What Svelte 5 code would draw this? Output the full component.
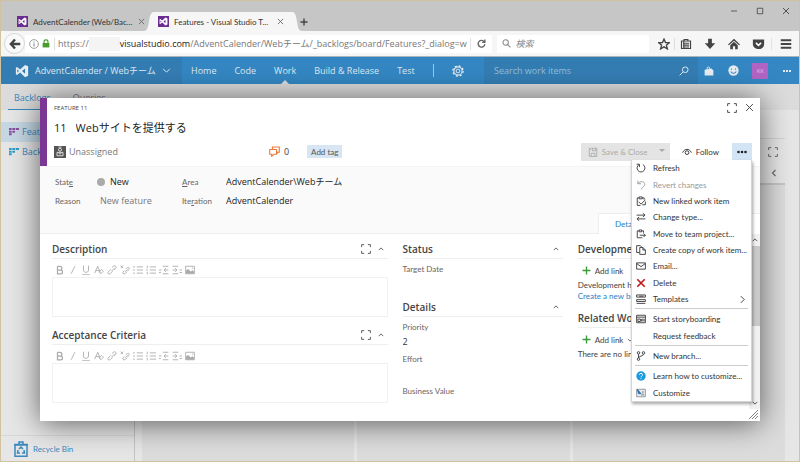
<script>
  let title = $state('Webサイトを提供する');
  let description = $state('');
  let criteria = $state('');

  const menuGroups = [
    [
      { label: 'Refresh', icon: 'refresh' },
      { label: 'Revert changes', icon: 'revert', disabled: true },
      { label: 'New linked work item', icon: 'linked' },
      { label: 'Change type...', icon: 'swap' },
      { label: 'Move to team project...', icon: 'move' },
      { label: 'Create copy of work item...', icon: 'copy' },
      { label: 'Email...', icon: 'mail' },
      { label: 'Delete', icon: 'delete' },
      { label: 'Templates', icon: 'templates', submenu: true }
    ],
    [
      { label: 'Start storyboarding', icon: 'storyboard' },
      { label: 'Request feedback', icon: '' }
    ],
    [{ label: 'New branch...', icon: 'branch' }],
    [
      { label: 'Learn how to customize...', icon: 'help' },
      { label: 'Customize', icon: 'customize' }
    ]
  ];

  const tools = ['bold', 'italic', 'underline', 'clear', 'link', 'unlink', 'bullets', 'numbers', 'outdent', 'indent', 'image'];
  const hubs = ['Home', 'Code', 'Work', 'Build & Release', 'Test'];

  // Stroke outlines on a 16 x 16 grid
  const lines = {
    close: 'M2 2L14 14M14 2L2 14',
    minimize: 'M2 8H14',
    maximize: 'M2.500 2.500H13.500V13.500H2.500Z',
    plus: 'M8 1V15M1 8H15',
    down: 'M2 5L8 11L14 5',
    up: 'M2 11L8 5L14 11',
    left: 'M11 2L5 8L11 14',
    right: 'M5 2L11 8L5 14',
    full: 'M1 5V1H5M11 1H15V5M15 11V15H11M5 15H1V11',
    search: 'M10 1.500A4.500 4.500 0 1 1 10 10.500A4.500 4.500 0 1 1 10 1.500M6.500 9.500L1 15',
    find: 'M6.500 1.500A4.500 4.500 0 1 1 6.500 11A4.500 4.500 0 1 1 6.500 1.500M10 10L15 15',
    reload: 'M13 5A6 6 0 1 0 14 9M14 1V6H9',
    refresh: 'M11 2.500A6.300 6.300 0 1 1 5 2.500M1 2H5.500V6.500',
    revert: 'M3 1V6H8M3 6C6 1 14 2 14 7C14 10 10 12 8 15',
    linked: 'M7 15H2V3H5M10 3H13V6M5 1.500H10V4.500H5ZM4 9L8 13L15 6M15 9V14H10',
    swap: 'M1 5H14M11 2L14.500 5L11 8M15 11H2M5 8L1.500 11L5 14',
    move: 'M10 14H2V3H5M9 3H12V6M5 1.500H9V4.500H5ZM6 10H15M12 7L15 10L12 13',
    copy: 'M5 12H1V1H7L9 3M6 4H11L15 8V15H6ZM11 4V8H15',
    mail: 'M1 3H15V13H1ZM1 4L8 9L15 4',
    templates: 'M1 1.500H15V5H1ZM1 9H15V12H1ZM1 15H15M5 3.500H12',
    storyboard: 'M1 2H15V14H1ZM1 5H15M3 8H7V12H3ZM9 8V12M11 7V12M13 8V12',
    branch: 'M4 5V11M12 5C12 9 5 7 4 11M4 1A2 2 0 1 1 4 5A2 2 0 1 1 4 1M12 1A2 2 0 1 1 12 5A2 2 0 1 1 12 1M4 11A2 2 0 1 1 4 15A2 2 0 1 1 4 11',
    eye: 'M1 9C4 2 12 2 15 9M8 6A3 3 0 1 1 8 12A3 3 0 1 1 8 6',
    comments: 'M5 5V1.500H15V9H13L12 11V9H11M1 5H11V12H7L4 15V12H1Z',
    save: 'M2 5V15H14V2H6M5 15V10H11V15M7 2V6H12V2M1 1L5 5M5 1L1 5',
    bold: 'M4 2V14H9C13 14 13 8 9 8H4M4 2H8C12 2 12 8 8 8',
    italic: 'M11 2L5 14',
    underline: 'M4 1V8C4 13 12 13 12 8V1M2 15.500H14',
    clear: 'M1 13L6 2L10 12M3 9H8M12 7L15 10L11 14L8 11Z',
    link: 'M7 10L12 5M8 4L11 1.500C13 0 16 3 14 5L11 8M6 7L2 11C0 13 3 16 5 14L9 10',
    unlink: 'M1 1L5 5M5 1L1 5M8 11L12 7M9 6L12 4C14 3 16 5 14 7L12 10M7 9L5 11C3 13 6 15 8 14L11 11',
    bullets: 'M6 3H16M6 8H16M6 13H16M0 3H3M0 8H3M0 13H3',
    numbers: 'M6 3H16M6 8H16M6 13H16M2 1V5M0 8H3M2 11V15',
    outdent: 'M6 2H15M8 8H15M6 14H15M11 5L8 8L11 11M0 8H4M0 12H3',
    indent: 'M1 2H10M1 8H8M1 14H10M5 5L8 8L5 11M12 8H16M12 12H16',
    bin: 'M2 4H14V15.300H2ZM1 3.500H15M6 3V1H10V3M6 8L8 6L10 8M5 9L4.500 12H7M11 9L11.500 12H9'
  };
</script>

{#snippet icon(name, size = 10, weight = 1.4)}
  <svg width={size} height={size} viewBox="0 0 16 16" fill="none" stroke="currentColor" stroke-width={weight} aria-hidden="true">
    {#if name === 'delete'}
      <path d="M2 2L14 14M14 2L2 14" stroke="#c41d20" stroke-width="2.800" />
    {:else if name === 'help'}
      <circle cx="8" cy="8" r="7.500" fill="#1a9be0" stroke="none" />
      <path d="M5.500 6C5.500 3 10.500 3 10.500 6C10.500 8 8 8 8 10M8 11.500V13" stroke="#fff" stroke-width="1.600" />
    {:else if name === 'customize'}
      <path d="M1 2H15V14H1Z" fill="#e6eaee" stroke="#8b9197" />
      <path d="M8 11H13M11 5V9" stroke="#777" />
      <path d="M2 2L8 9L4 9Z" fill="#2d6fae" stroke="#2d6fae" />
    {:else if name === 'image'}
      <path d="M1 2H15V14H1Z" />
      <path d="M2 13V9L5 7L9 11L12 9L14 11V13Z" fill="currentColor" />
      <path d="M11 5H13" />
    {:else if name}
      <path d={lines[name]} />
    {/if}
  </svg>
{/snippet}

{#snippet vs(size, color)}
  <svg width={size} height={size} viewBox="0 0 16 16" fill={color} aria-hidden="true">
    <path fill-rule="evenodd" d="M11.500 1L15 2.500V13.500L11.500 15L5.800 9.800L2.300 12.500L1 11.800V4.200L2.300 3.500L5.800 6.200ZM11.500 5L8 8L11.500 11ZM2.600 6V10L4.500 8Z" />
  </svg>
{/snippet}

{#snippet backlogIcon(color)}
  <svg width="10" height="8" viewBox="0 0 15 12" fill={color} aria-hidden="true">
    <path d="M0 0H4V3H0ZM5 0H9V3H5ZM10 0H15V3H10ZM0 4H4V7H0ZM5 4H9V7H5ZM0 8H4V11H0Z" />
  </svg>
{/snippet}

{#snippet editor(id, heading)}
  <section class="editor">
    <h2>
      <label for={id}>{heading}</label>
      <button aria-label="Full screen">{@render icon('full', 10, 1.5)}</button>
      <button aria-label="Collapse">{@render icon('up', 6, 2.4)}</button>
    </h2>
    <div class="tools">
      {#each tools as tool}
        <button aria-label={tool}>{@render icon(tool, 10, tool === 'bold' ? 2 : 1.4)}</button>
      {/each}
    </div>
    {#if id === 'description'}
      <textarea {id} bind:value={description}></textarea>
    {:else}
      <textarea {id} bind:value={criteria}></textarea>
    {/if}
  </section>
{/snippet}

<div class="window" lang="ja">
  <div class="tabstrip">
    <div class="tab small">
      <span class="favicon">{@render vs(9, '#fff')}</span>
      <span>AdventCalender (Web/Bac...</span>
      <button aria-label="Close tab">{@render icon('close', 7, 2)}</button>
    </div>
    <div class="tab active small">
      <svg class="curve" viewBox="0 0 10 18" preserveAspectRatio="none" aria-hidden="true"><path d="M0 18C7 18 3 0 10 0V18Z" fill="#f6f6f6" /></svg>
      <span class="favicon">{@render vs(9, '#fff')}</span>
      <span>Features - Visual Studio T...</span>
      <button aria-label="Close tab">{@render icon('close', 7, 2)}</button>
      <svg class="curve end" viewBox="0 0 10 18" preserveAspectRatio="none" aria-hidden="true"><path d="M10 18C3 18 7 0 0 0V18Z" fill="#f6f6f6" /></svg>
    </div>
    <button class="newtab" aria-label="New tab">{@render icon('plus', 8, 2.8)}</button>
    <div class="caption">
      <button aria-label="Minimize">{@render icon('minimize', 8, 1.6)}</button>
      <button aria-label="Maximize">{@render icon('maximize', 8, 1.6)}</button>
      <button aria-label="Close">{@render icon('close', 8, 1.8)}</button>
    </div>
  </div>

  <div class="navbar">
    <button class="back" aria-label="Back">
      <svg width="12" height="12" viewBox="0 0 16 16" fill="none" stroke="#444" stroke-width="3.200"><path d="M8 2L2.500 8L8 14M3 8H15" /></svg>
    </button>
    <div class="address">
      <svg width="10" height="10" viewBox="0 0 16 16" fill="none" stroke="#8a8a8a" stroke-width="1.300"><circle cx="8" cy="8" r="7" /><path d="M8 4V5.500M8 7V12" stroke-width="1.800" /></svg>
      <svg width="8" height="9" viewBox="0 0 14 16" fill="#4a9c2d"><path d="M1 7H13V15H1Z" /><path d="M3.500 8V5C3.500 0.500 10.500 0.500 10.500 5V8" fill="none" stroke="#4a9c2d" stroke-width="2" /></svg>
      <span class="rule"></span>
      <span class="url">https://<i></i><b>visualstudio.com</b>/AdventCalender/Webチーム/_backlogs/board/Features?_dialog=wo</span>
      <button class="reload" aria-label="Reload">{@render icon('reload', 9, 2.4)}</button>
    </div>
    <label class="find">
      {@render icon('find', 9, 1.8)}
      <input type="search" placeholder="検索" aria-label="検索" />
    </label>
    <div class="actions">
      <button class="bookmark" aria-label="Bookmark"><svg width="12" height="12" viewBox="0 0 16 16" fill="none" stroke="#444" stroke-width="1.800"><path d="M8 1.500L10 6L15 6.300L11.200 9.500L12.500 14.500L8 11.800L3.500 14.500L4.800 9.500L1 6.300L6 6Z" /></svg></button>
      <button aria-label="Reading list"><svg width="12" height="12" viewBox="0 0 16 16" fill="none" stroke="#444" stroke-width="1.600"><path d="M2 4H14V14H2ZM5.500 4V2H10.500V4M5 7H12M5 9.500H12M5 12H12M5 4V14" /></svg></button>
      <button aria-label="Downloads"><svg width="12" height="12" viewBox="0 0 16 16" fill="#444"><path d="M5.500 1H10.500V7H15L8 14.500L1 7H5.500Z" /></svg></button>
      <button aria-label="Home page"><svg width="12" height="12" viewBox="0 0 16 16" fill="#444"><path d="M8 1L16 8.500L14.800 9.800L8 3.700L1.200 9.800L0 8.500ZM3 9.500L8 5L13 9.500V15H9.500V11H6.500V15H3Z" /></svg></button>
      <button aria-label="Pocket"><svg width="13" height="12" viewBox="0 0 17 16"><path d="M1 2H16V8C16 17 1 17 1 8Z" fill="#444" /><path d="M5 6.500L8.500 9.800L12 6.500" fill="none" stroke="#fff" stroke-width="2" /></svg></button>
      <button class="burger" aria-label="Menu"><svg width="12" height="12" viewBox="0 0 16 16" stroke="#444" stroke-width="2.600"><path d="M1 3H15M1 8H15M1 13H15" /></svg></button>
    </div>
  </div>

  <header class="hub">
    <button class="project">{@render vs(14, '#e6eef4')}<span>AdventCalender / Webチーム</span>{@render icon('down', 9, 1.7)}</button>
    <nav>
      {#each hubs as hub}
        <a href="#{hub}" class:current={hub === 'Work'}>{hub}</a>
      {/each}
      <span class="divider"></span>
      <button aria-label="Settings"><svg width="12" height="12" viewBox="0 0 16 16" fill="none" stroke="#e1ebf2"><circle cx="8" cy="8" r="5.500" stroke-width="1.400" /><circle cx="8" cy="8" r="2.500" stroke-width="1.300" /><circle cx="8" cy="8" r="6.800" stroke-width="1.800" stroke-dasharray="2.700 2.640" /></svg></button>
    </nav>
    <label class="lookup">
      <input type="search" placeholder="Search work items" aria-label="Search work items" />
      {@render icon('search', 10, 1.6)}
    </label>
    <div class="account">
      <button aria-label="Marketplace"><svg width="10" height="10" viewBox="0 0 16 16" fill="#e6edf2"><path d="M1 6L12 4L15 7V15H1Z" /><path d="M5 6V3C5 1 9 1 9 3V5" fill="none" stroke="#e6edf2" stroke-width="1.400" /></svg></button>
      <button aria-label="Feedback"><svg width="11" height="11" viewBox="0 0 16 16"><circle cx="8" cy="8" r="7.500" fill="#e6edf2" /><path d="M5 5V7M11 5V7M4 9.500C6 13 10 13 12 9.500" fill="none" stroke="#3487c3" stroke-width="1.500" /></svg></button>
      <button class="avatar">KK</button>
      <button aria-label="More"><svg width="10" height="4" viewBox="0 0 10 4" fill="#e1ebf2"><path d="M1 1H3V3H1ZM4 1H6V3H4ZM7 1H9V3H7Z" /></svg></button>
    </div>
  </header>

  <div class="views"><a class="on" href="#backlogs">Backlogs</a><a href="#queries">Queries</a></div>

  <div class="page">
    <aside>
      <a class="selected" href="#features">{@render backlogIcon('#8a4f9e')}Features</a>
      <a href="#items">{@render backlogIcon('#2f9cc4')}Backlog items</a>
      <a class="recycle small" href="#bin">{@render icon('bin', 16, 1.5)}Recycle Bin</a>
    </aside>
    <main>
      <div class="boardbar"></div>
      <div class="boardhead"><button aria-label="Full screen board">{@render icon('full', 10, 1.5)}</button><button aria-label="Collapse column">{@render icon('left', 8, 2.2)}</button></div>
      <div class="board"><div></div><div></div><div></div></div>
    </main>
  </div>

  <div class="dialog" role="dialog" aria-label="Feature 11">
    <div class="head">
      <div class="row top">
        <span class="kind">FEATURE 11</span>
        <span class="grow"></span>
        <button aria-label="Maximize dialog">{@render icon('full', 10, 1.5)}</button>
        <button aria-label="Close dialog">{@render icon('close', 9, 1.7)}</button>
      </div>
      <div class="row title">
        <span>11</span>
        <input bind:value={title} aria-label="Title" />
      </div>
      <div class="row commands">
        <button class="assignee">
          <svg width="12" height="12" viewBox="0 0 16 16"><path d="M0 0H16V16H0Z" fill="#555" /><path d="M8 3A2 2 0 1 1 8 7A2 2 0 1 1 8 3M4 8.500H12V13H4ZM6 9L8 11L10 9M6 1.500H10" fill="none" stroke="#e6e6e6" stroke-width="1.200" /></svg>
          Unassigned
        </button>
        <button class="comments">{@render icon('comments', 11, 1.6)}<span>0</span></button>
        <button class="tag small">Add tag</button>
        <span class="grow"></span>
        <button class="save small" disabled>{@render icon('save', 10, 1.4)}<span>Save &amp; Close</span><i></i></button>
        <button class="follow small">{@render icon('eye', 10, 1.5)}Follow</button>
        <button class="more" aria-label="Actions"><svg width="10" height="4" viewBox="0 0 10 4" fill="#222"><circle cx="1.500" cy="2" r="1.300" /><circle cx="5" cy="2" r="1.300" /><circle cx="8.500" cy="2" r="1.300" /></svg></button>
      </div>
    </div>

    <div class="summary">
      <div class="fields">
        <label class="small" for="state">Stat<u>e</u></label>
        <span class="value dot"><input id="state" value="New" /></span>
        <label class="small" for="area"><u>A</u>rea</label>
        <input id="area" value="AdventCalender\Webチーム" />
        <label class="small" for="reason">Reason</label>
        <input id="reason" class="muted" value="New feature" />
        <label class="small" for="iteration">Ite<u>r</u>ation</label>
        <input id="iteration" value="AdventCalender" />
      </div>
      <button class="pagetab small">Details</button>
    </div>

    <div class="body">
      <div class="columns">
        <div class="column">
          {@render editor('description', 'Description')}
          {@render editor('criteria', 'Acceptance Criteria')}
        </div>
        <div class="column small">
          <section class="status">
            <h2>Status<button aria-label="Collapse">{@render icon('up', 6, 2.4)}</button></h2>
            <label for="target">Target Date</label>
            <input id="target" />
          </section>
          <section>
            <h2>Details<button aria-label="Collapse">{@render icon('up', 6, 2.4)}</button></h2>
            <label for="priority">Priority</label>
            <input id="priority" value="2" />
            <label for="effort">Effort</label>
            <input id="effort" />
            <label for="value">Business Value</label>
          </section>
        </div>
        <div class="column small links">
          <section class="development">
            <h2>Development</h2>
            <button class="add"><span class="green">{@render icon('plus', 9, 2.4)}</span>Add link</button>
            <p>Development hasn't started on this item.</p>
            <a href="#branch">Create a new branch</a>
          </section>
          <section>
            <h2>Related Work</h2>
            <button class="add"><span class="green">{@render icon('plus', 9, 2.4)}</span>Add link {@render icon('down', 6, 2)}</button>
            <p>There are no links in this group.</p>
          </section>
        </div>
      </div>
      <div class="scrollbar">{@render icon('up', 6, 2.6)}<i></i>{@render icon('down', 6, 2.6)}</div>
    </div>
    <div class="foot"><svg width="9" height="9" viewBox="0 0 9 9" stroke="#888"><path d="M0 9L9 0M3 9L9 3M6 9L9 6" /></svg></div>

    <div class="menu small" role="menu">
      {#each menuGroups as group, i}
        {#if i}<hr />{/if}
        {#each group as item}
          <button role="menuitem" disabled={item.disabled}>
            {@render icon(item.icon, 10, 1.4)}<span>{item.label}</span>
            {#if item.submenu}{@render icon('right', 9, 1.6)}{/if}
          </button>
        {/each}
      {/each}
    </div>
  </div>
</div>

<style>
  :global(body) { background: #e6e6e6; }
  .window, .window * { box-sizing: border-box; }
  .window {
    position: relative;
    display: flex;
    flex-direction: column;
    min-height: 100vh;
    overflow: hidden;
    border: 1px solid #cfc3a0;
    font: 9px/12px "Open Sans", "Noto Sans CJK JP", sans-serif;
    color: #333;
    background: #e6e6e6;
  }
  button, input, textarea { margin: 0; padding: 0; border: 0; background: none; font: inherit; color: inherit; outline: 0; border-radius: 0; }
  .small, button.small { font: 8px/12px Lato, "Noto Sans CJK JP", sans-serif; }
  input { min-width: 0; width: 100%; appearance: none; }
  button { display: flex; align-items: center; white-space: nowrap; }
  a { color: inherit; text-decoration: none; }
  svg { display: block; flex: none; }
  h2, p { margin: 0; font-weight: 400; }
  .grow { flex: 1; }

  .tabstrip { display: flex; align-items: flex-end; height: 30px; background: #c6c6c6; }
  .tab { display: flex; align-items: center; gap: 5px; height: 19px; width: 137px; padding-left: 16px; color: #333; white-space: nowrap; }
  .tab button { color: #666; margin-left: auto; }
  .favicon { display: grid; place-items: center; width: 11px; height: 11px; background: #6c2c91; flex: none; }
  .tab.active { position: relative; width: 138px; margin-left: 16px; padding-left: 4px; background: #f6f6f6; }
  .tab.active button { margin-right: 8px; }
  .curve { position: absolute; left: -10px; top: 0; width: 10px; height: 100%; }
  .curve.end { left: 100%; }
  .newtab { height: 19px; margin-left: 8px; color: #444; }
  .caption { display: flex; gap: 18px; align-self: flex-start; margin: 6px 9px 0 auto; color: #444; }

  .navbar { display: flex; align-items: center; height: 26px; background: #f6f6f6; border-bottom: 1px solid #a9b4bc; }
  .back { justify-content: center; width: 21px; height: 21px; margin-left: 3px; border: 1px solid #d5d5d5; border-radius: 50%; background: #fafafa; }
  .address { display: flex; align-items: center; gap: 3px; flex: 1; min-width: 0; height: 18px; padding-left: 4px; background: #fff; }
  .rule { width: 1px; height: 12px; margin-left: 1px; background: #ddd; }
  .url { flex: 1; min-width: 0; overflow: hidden; white-space: nowrap; color: #777; line-height: 16px; }
  .url i { display: inline-block; width: 31px; height: 14px; background: #f4f4f4; vertical-align: middle; }
  .url b { font-weight: 400; color: #222; }
  .reload { justify-content: center; width: 22px; height: 12px; border-left: 1px solid #e2e2e2; color: #666; }
  .find { display: flex; align-items: center; gap: 4px; flex: 0 0 19%; height: 18px; margin-left: 5px; padding: 0 5px; background: #fff; color: #888; }
  .find input { font-style: italic; }
  .find input::placeholder { color: #888; opacity: 1; }
  .actions { display: flex; margin: 0 7px 0 9px; }
  .actions button { margin-right: 12px; }
  .actions .bookmark { margin-right: 5px; padding-right: 4px; border-right: 1px solid #ddd; }
  .actions .burger { margin: 0 0 0 -6px; padding-left: 8px; border-left: 1px solid #e2e2e2; }

  .hub { display: flex; height: 27px; background: #3487c3; color: #dfe9f1; }
  .project { width: 181px; padding-left: 14px; gap: 6px; background: #347db3; }
  .hub nav { display: flex; align-items: stretch; flex: 1; gap: 18px; padding-left: 9px; }
  .hub nav a { position: relative; display: flex; align-items: center; white-space: nowrap; }
  .hub nav .current::after { content: ""; position: absolute; left: calc(50% - 4px); bottom: 0; border: 4px solid transparent; border-top: 0; border-bottom-color: #dcdcdc; }
  .divider { width: 1px; height: 13px; align-self: center; background: #a9c6dc; }
  .lookup { display: flex; align-items: center; width: 214px; padding: 0 9px 0 10px; background: #347db3; }
  .lookup input::placeholder { color: #94bdd9; opacity: 1; }
  .account { display: flex; align-items: center; justify-content: space-between; width: 101px; padding: 0 7px 0 6px; }
  .avatar { justify-content: center; width: 16px; height: 16px; background: #b264c4; font-size: 6px; color: #dcc0e4; }

  .views { display: flex; gap: 16px; height: 26px; padding-left: 7px; background: #dcdcdc; color: #777; }
  .views a { padding: 8px 6px 0; }
  .views a + a { padding-left: 0; }
  .views .on { color: #3b88be; border-bottom: 1px solid #3b88be; }

  .page { display: flex; flex: 1; }
  aside { display: flex; flex-direction: column; width: 134px; padding-top: 12px; border-right: 1px solid #c4c4c4; color: #3b88be; }
  aside a { display: flex; align-items: center; gap: 3px; height: 20px; padding-left: 8px; }
  aside .selected { background: #c5d8e4; }
  aside .recycle { height: 26px; margin-top: auto; padding-left: 12px; gap: 4px; border-top: 1px solid #d8d8d8; }
  main { display: flex; flex-direction: column; flex: 1; padding: 0 14px 0 7px; }
  .boardbar { height: 29px; border-bottom: 1px solid #d2d2d2; }
  .boardhead { display: flex; flex-direction: column; align-items: flex-end; gap: 12px; height: 46px; padding: 8px 7px 0 0; border-bottom: 2px solid #c6c6c6; color: #666; }
  .board { display: grid; grid-template-columns: repeat(3, 1fr); gap: 3px; flex: 1; }
  .board div { background: #dcdcdc; }

  .dialog { position: absolute; inset: 97px 39px 40px; display: flex; flex-direction: column; background: #fff; box-shadow: 0 2px 28px rgba(0, 0, 0, 0.6); }
  .head { display: flex; flex-direction: column; height: 68px; padding: 0 6px 0 7px; border-left: 7px solid #7a3793; }
  .row { display: flex; align-items: center; }
  .top { height: 19px; gap: 8px; color: #444; }
  .kind { font-size: 6px; }
  .title { height: 22px; gap: 9px; font-size: 11px; line-height: 18px; color: #222; }
  .commands { height: 25px; padding-right: 2px; }
  .assignee { gap: 3px; color: #777; }
  .comments { gap: 4px; margin-left: 151px; color: #444; }
  .comments :global(svg) { color: #ee7b3a; }
  .tag { height: 13px; margin-left: 18px; padding: 0 4px; background: #d7e6f2; color: #555; }
  .save { height: 18px; width: 89px; padding-left: 7px; gap: 4px; background: #e4e4e4; color: #aaa; }
  .save i { margin: 0 5px 2px auto; border: 3px solid transparent; border-top-color: #aaa; border-bottom: 0; }
  .follow { gap: 4px; margin: 0 13px 0 12px; }
  .more { justify-content: center; width: 20px; height: 18px; background: #d3e5f5; }

  .summary { position: relative; height: 68px; padding: 5px 15px; background: #fafafa; border-top: 1px solid #f3f3f3; border-bottom: 1px solid #eee; }
  .fields { display: grid; grid-template-columns: 45px 82px 44px 200px; grid-auto-rows: 19px; align-items: center; color: #222; }
  .fields label { padding-top: 1px; color: #666; }
  .dot { display: flex; align-items: center; gap: 5px; }
  .dot::before { content: ""; flex: none; width: 8px; height: 8px; margin-left: -3px; border-radius: 50%; background: #aaa; }
  .muted { color: #777; }
  .pagetab { position: absolute; right: 0; bottom: -1px; width: 162px; height: 21px; padding-left: 16px; border: 1px solid #eee; border-bottom: 0; border-right: 0; background: #fff; color: #1f7fc9; }

  .body { display: flex; flex: 1; min-height: 0; }
  .columns { display: grid; grid-template-columns: 335fr 160fr 171fr; gap: 15px; flex: 1; min-width: 0; padding: 6px 0 0 12px; }
  .column { min-width: 0; }
  h2 { display: flex; align-items: center; gap: 7px; height: 19px; margin-bottom: 4px; padding-right: 4px; border-bottom: 1px solid #eee; font: 600 10px/14px "Open Sans", sans-serif; color: #444; }
  h2 label { flex: 1; }
  h2 button { margin-left: auto; color: #555; }
  .editor { margin-bottom: 9px; }
  .tools { display: flex; gap: 3px; height: 14px; padding-left: 3px; color: #aaa; }
  textarea { display: block; width: 100%; height: 40px; border: 1px solid #f0f0f0; resize: none; }
  section > label { display: block; color: #666; }
  .column input { display: block; height: 17px; margin-bottom: 3px; font: 9px/14px "Open Sans", sans-serif; }
  .status { margin-bottom: 6px; }
  .links { color: #444; }
  .links p, .links a { display: block; white-space: nowrap; line-height: 11px; }
  .links a { color: #1f7fc9; }
  .add { gap: 4px; height: 15px; margin-bottom: 2px; padding-left: 4px; }
  .green { color: #399b39; }
  .development { margin-bottom: 7px; }
  .scrollbar { display: flex; flex-direction: column; align-items: center; justify-content: space-between; width: 11px; padding: 3px 0; background: #f1f1f1; color: #555; }
  .scrollbar i { width: 100%; height: 80px; margin: 3px 0 auto; background: #c9c9c9; }
  .foot { display: flex; justify-content: flex-end; padding: 1px 2px 2px; }

  .menu { position: absolute; top: 62px; right: 8px; display: flex; flex-direction: column; width: 121px; min-height: 242px; background: #fff; border: 1px solid #d5d5d5; border-top: 0; box-shadow: 1px 2px 3px rgba(0, 0, 0, 0.35); }
  .menu button { flex: 1; gap: 7px; padding: 0 4px; color: #333; }
  .menu button:disabled { color: #999; }
  .menu span { flex: 1; text-align: left; }
  .menu hr { width: calc(100% - 6px); height: 1px; margin: 1px 3px 2px; border: 0; background: #ccc; }
</style>
